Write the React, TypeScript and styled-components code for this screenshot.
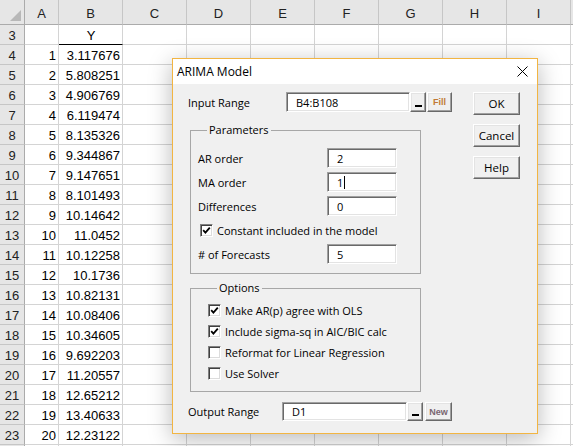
import styled, { createGlobalStyle, css } from 'styled-components';

const GlobalStyle = createGlobalStyle`
  body {
    margin: 0;
    overflow: hidden;
    background: #fff;
  }
`;

const Screen = styled.div`
  position: relative;
  width: 573px;
  height: 446px;
  overflow: hidden;
  font-family: 'Liberation Sans', Arial, sans-serif;
`;

/* ---------- spreadsheet ---------- */

const Sheet = styled.div`
  display: grid;
  grid-template-columns: 25px 34px repeat(9, 64px);
  grid-template-rows: 25px;
  grid-auto-rows: 20px;
  font-size: 13px;
  color: #000;
`;

const Corner = styled.div`
  box-sizing: border-box;
  background: #e6e6e6;
  border-right: 1px solid #ababab;
  border-bottom: 1px solid #ababab;
  display: flex;
  align-items: flex-end;
  justify-content: flex-end;
  padding: 0 3px 3px 0;
`;

const ColHeader = styled.div`
  box-sizing: border-box;
  background: #e6e6e6;
  border-right: 1px solid #c6c6c6;
  border-bottom: 1px solid #ababab;
  text-align: center;
  padding-top: 4px;
  line-height: 20px;
  color: #222;
`;

const RowHeader = styled.div`
  box-sizing: border-box;
  background: #e6e6e6;
  border-right: 1px solid #ababab;
  border-bottom: 1px solid #c6c6c6;
  text-align: center;
  padding-top: 2px;
  line-height: 17px;
  color: #222;
`;

const Cell = styled.div<{ $align?: 'left' | 'center' | 'right'; $underline?: boolean }>`
  box-sizing: border-box;
  border-right: 1px solid #d4d4d4;
  border-bottom: 1px solid ${(p) => (p.$underline ? '#000' : '#d4d4d4')};
  padding: 2px 2px 0 3px;
  line-height: 17px;
  text-align: ${(p) => p.$align || 'left'};
  white-space: nowrap;
  overflow: hidden;
`;

// the last column is only partly on screen, so its letter is left out
const columns = ['A', 'B', 'C', 'D', 'E', 'F', 'G', 'H', 'I', ''];

const series = [
  '3.117676', '5.808251', '4.906769', '6.119474', '8.135326',
  '9.344867', '9.147651', '8.101493', '10.14642', '11.0452',
  '10.12258', '10.1736', '10.82131', '10.08406', '10.34605',
  '9.692203', '11.20557', '12.65212', '13.40633', '12.23122',
];

const Spreadsheet = () => {
  const rows = [];
  for (let r = 3; r <= 24; r++) {
    const i = r - 4;
    rows.push(
      <RowHeader key={`h${r}`}>{r < 24 ? r : ''}</RowHeader>,
      <Cell key={`a${r}`} $align="right">{i >= 0 && i < series.length ? i + 1 : ''}</Cell>,
      <Cell key={`b${r}`} $align={r === 3 ? 'center' : 'right'} $underline={r === 3}>
        {r === 3 ? 'Y' : series[i] || ''}
      </Cell>,
    );
    for (let c = 2; c < columns.length; c++) rows.push(<Cell key={`${c}-${r}`} />);
  }
  return (
    <Sheet>
      <Corner>
        <svg width="11" height="11" viewBox="0 0 11 11">
          <polygon points="11,0 11,11 0,11" fill="#b8b8b8" />
        </svg>
      </Corner>
      {columns.map((c, i) => (
        <ColHeader key={i}>{c}</ColHeader>
      ))}
      {rows}
    </Sheet>
  );
};

/* ---------- dialog ---------- */

const raised = css`
  box-sizing: border-box;
  background: #f0f0f0;
  border: 1px solid;
  border-color: #fff #696969 #696969 #fff;
  box-shadow: inset -1px -1px 0 #a0a0a0, inset 1px 1px 0 #e3e3e3;
`;

const sunken = css`
  box-sizing: border-box;
  background: #fff;
  border: 1px solid;
  border-color: #a0a0a0 #fff #fff #a0a0a0;
  box-shadow: inset 1px 1px 0 #696969, inset -1px -1px 0 #e3e3e3;
`;

const Dialog = styled.div`
  position: absolute;
  left: 172px;
  top: 58px;
  width: 366px;
  height: 376px;
  box-sizing: border-box;
  border: 1px solid #f2b542;
  background: #f0f0f0;
  box-shadow: 0 5px 22px rgba(0, 0, 0, 0.28);
  display: flex;
  flex-direction: column;
  font-family: 'Open Sans', 'Noto Sans', sans-serif;
  font-size: 11px;
  color: #000;
`;

const TitleBar = styled.div`
  height: 25px;
  background: #fff;
  display: flex;
  align-items: center;
  justify-content: space-between;
  padding: 0 9px 0 4px;
  font-size: 12px;
`;

const Body = styled.div`
  display: grid;
  grid-template-columns: 264px 47px;
  column-gap: 21px;
  align-items: start;
  padding: 8px 0 0 15px;
`;

const Main = styled.div`
  display: flex;
  flex-direction: column;
`;

const RangeRow = styled.div<{ $height: number; $top?: number }>`
  display: flex;
  align-items: center;
  height: ${(p) => p.$height}px;
  margin-top: ${(p) => p.$top || 0}px;
`;

const Label = styled.div<{ $width: number }>`
  width: ${(p) => p.$width}px;
  flex: none;
  white-space: nowrap;
`;

const TextBox = styled.div<{ $width: number }>`
  ${sunken};
  width: ${(p) => p.$width}px;
  height: 100%;
  padding-left: 9px;
  display: flex;
  align-items: center;
  white-space: nowrap;
`;

const Caret = styled.span`
  display: inline-block;
  width: 1px;
  height: 13px;
  margin-left: 1px;
  background: #000;
`;

const MinButton = styled.div`
  ${raised};
  width: 16px;
  height: 100%;
  display: flex;
  justify-content: center;
  align-items: flex-end;
  padding-bottom: 4px;
  &::after {
    content: '';
    width: 7px;
    height: 2px;
    background: #000;
  }
`;

const SmallButton = styled.div<{ $width: number; $gap: number; $color: string }>`
  ${raised};
  width: ${(p) => p.$width}px;
  height: 100%;
  margin-left: ${(p) => p.$gap}px;
  display: flex;
  align-items: center;
  justify-content: center;
  font-family: 'Liberation Sans', Arial, sans-serif;
  font-size: 9px;
  font-weight: bold;
  color: ${(p) => p.$color};
`;

const Group = styled.fieldset<{ $top: number; $pad: string }>`
  margin: ${(p) => p.$top}px 0 0 2px;
  width: 231px;
  box-sizing: border-box;
  padding: ${(p) => p.$pad};
  border: 1px solid #a7a7a7;
  min-inline-size: auto;
`;

const Legend = styled.legend`
  margin-left: 9px;
  padding: 0 2px;
  line-height: 12px;
  font-size: 11px;
`;

const Stack = styled.div<{ $gap: number }>`
  display: flex;
  flex-direction: column;
  gap: ${(p) => p.$gap}px;
`;

const ParamRow = styled.div`
  display: flex;
  align-items: center;
  height: 20px;
`;

const CheckRow = styled.label<{ $height: number; $indent: number }>`
  display: flex;
  align-items: center;
  gap: 4px;
  height: ${(p) => p.$height}px;
  padding-left: ${(p) => p.$indent}px;
  white-space: nowrap;
`;

const Box = styled.span`
  box-sizing: border-box;
  width: 13px;
  height: 13px;
  flex: none;
  background: #fff;
  border: 1px solid;
  border-color: #808080 #fff #fff #808080;
  box-shadow: inset 1px 1px 0 #404040, inset -1px -1px 0 #dcdcdc;
  display: flex;
  align-items: center;
  justify-content: center;
`;

const ButtonColumn = styled.div`
  display: flex;
  flex-direction: column;
  gap: 9px;
`;

const DialogButton = styled.div`
  ${raised};
  height: 23px;
  display: flex;
  align-items: center;
  justify-content: center;
  font-size: 11.5px;
`;

const Check = ({ checked, label, height, indent }: { checked?: boolean; label: string; height: number; indent: number }) => (
  <CheckRow $height={height} $indent={indent}>
    <Box>
      {checked && (
        <svg width="9" height="9" viewBox="0 0 9 9">
          <path d="M1.2 4.2 L3.4 6.6 L7.8 1.6" fill="none" stroke="#000" strokeWidth="1.8" />
        </svg>
      )}
    </Box>
    {label}
  </CheckRow>
);

const Param = ({ label, value, caret }: { label: string; value: string; caret?: boolean }) => (
  <ParamRow>
    <Label $width={129}>{label}</Label>
    <TextBox $width={70}>
      {value}
      {caret && <Caret />}
    </TextBox>
  </ParamRow>
);

const ArimaDialog = () => (
  <Dialog>
    <TitleBar>
      <span>ARIMA Model</span>
      <svg width="11" height="11" viewBox="0 0 11 11">
        <path d="M0.5 0.5 L10.5 10.5 M10.5 0.5 L0.5 10.5" stroke="#000" strokeWidth="1" />
      </svg>
    </TitleBar>
    <Body>
      <Main>
        <RangeRow $height={20}>
          <Label $width={98}>Input Range</Label>
          <TextBox $width={124}>B4:B108</TextBox>
          <MinButton />
          <SmallButton $width={25} $gap={1} $color="#c17a35">Fill</SmallButton>
        </RangeRow>

        <Group $top={12} $pad="12px 0 9px 7px">
          <Legend>Parameters</Legend>
          <Stack $gap={4}>
            <Param label="AR order" value="2" />
            <Param label="MA order" value="1" caret />
            <Param label="Differences" value="0" />
            <Check checked label="Constant included in the model" height={20} indent={2} />
            <Param label="# of Forecasts" value="5" />
          </Stack>
        </Group>

        <Group $top={8} $pad="6px 0 7px 17px">
          <Legend>Options</Legend>
          <Stack $gap={0}>
            <Check checked label="Make AR(p) agree with OLS" height={21} indent={0} />
            <Check checked label="Include sigma-sq in AIC/BIC calc" height={21} indent={0} />
            <Check label="Reformat for Linear Regression" height={21} indent={0} />
            <Check label="Use Solver" height={21} indent={0} />
          </Stack>
        </Group>

        <RangeRow $height={19} $top={10}>
          <Label $width={94}>Output Range</Label>
          <TextBox $width={125}>D1</TextBox>
          <MinButton />
          <SmallButton $width={27} $gap={2} $color="#7a6670">New</SmallButton>
        </RangeRow>
      </Main>

      <ButtonColumn>
        <DialogButton>OK</DialogButton>
        <DialogButton>Cancel</DialogButton>
        <DialogButton>Help</DialogButton>
      </ButtonColumn>
    </Body>
  </Dialog>
);

export default function App() {
  return (
    <Screen>
      <GlobalStyle />
      <Spreadsheet />
      <ArimaDialog />
    </Screen>
  );
}
